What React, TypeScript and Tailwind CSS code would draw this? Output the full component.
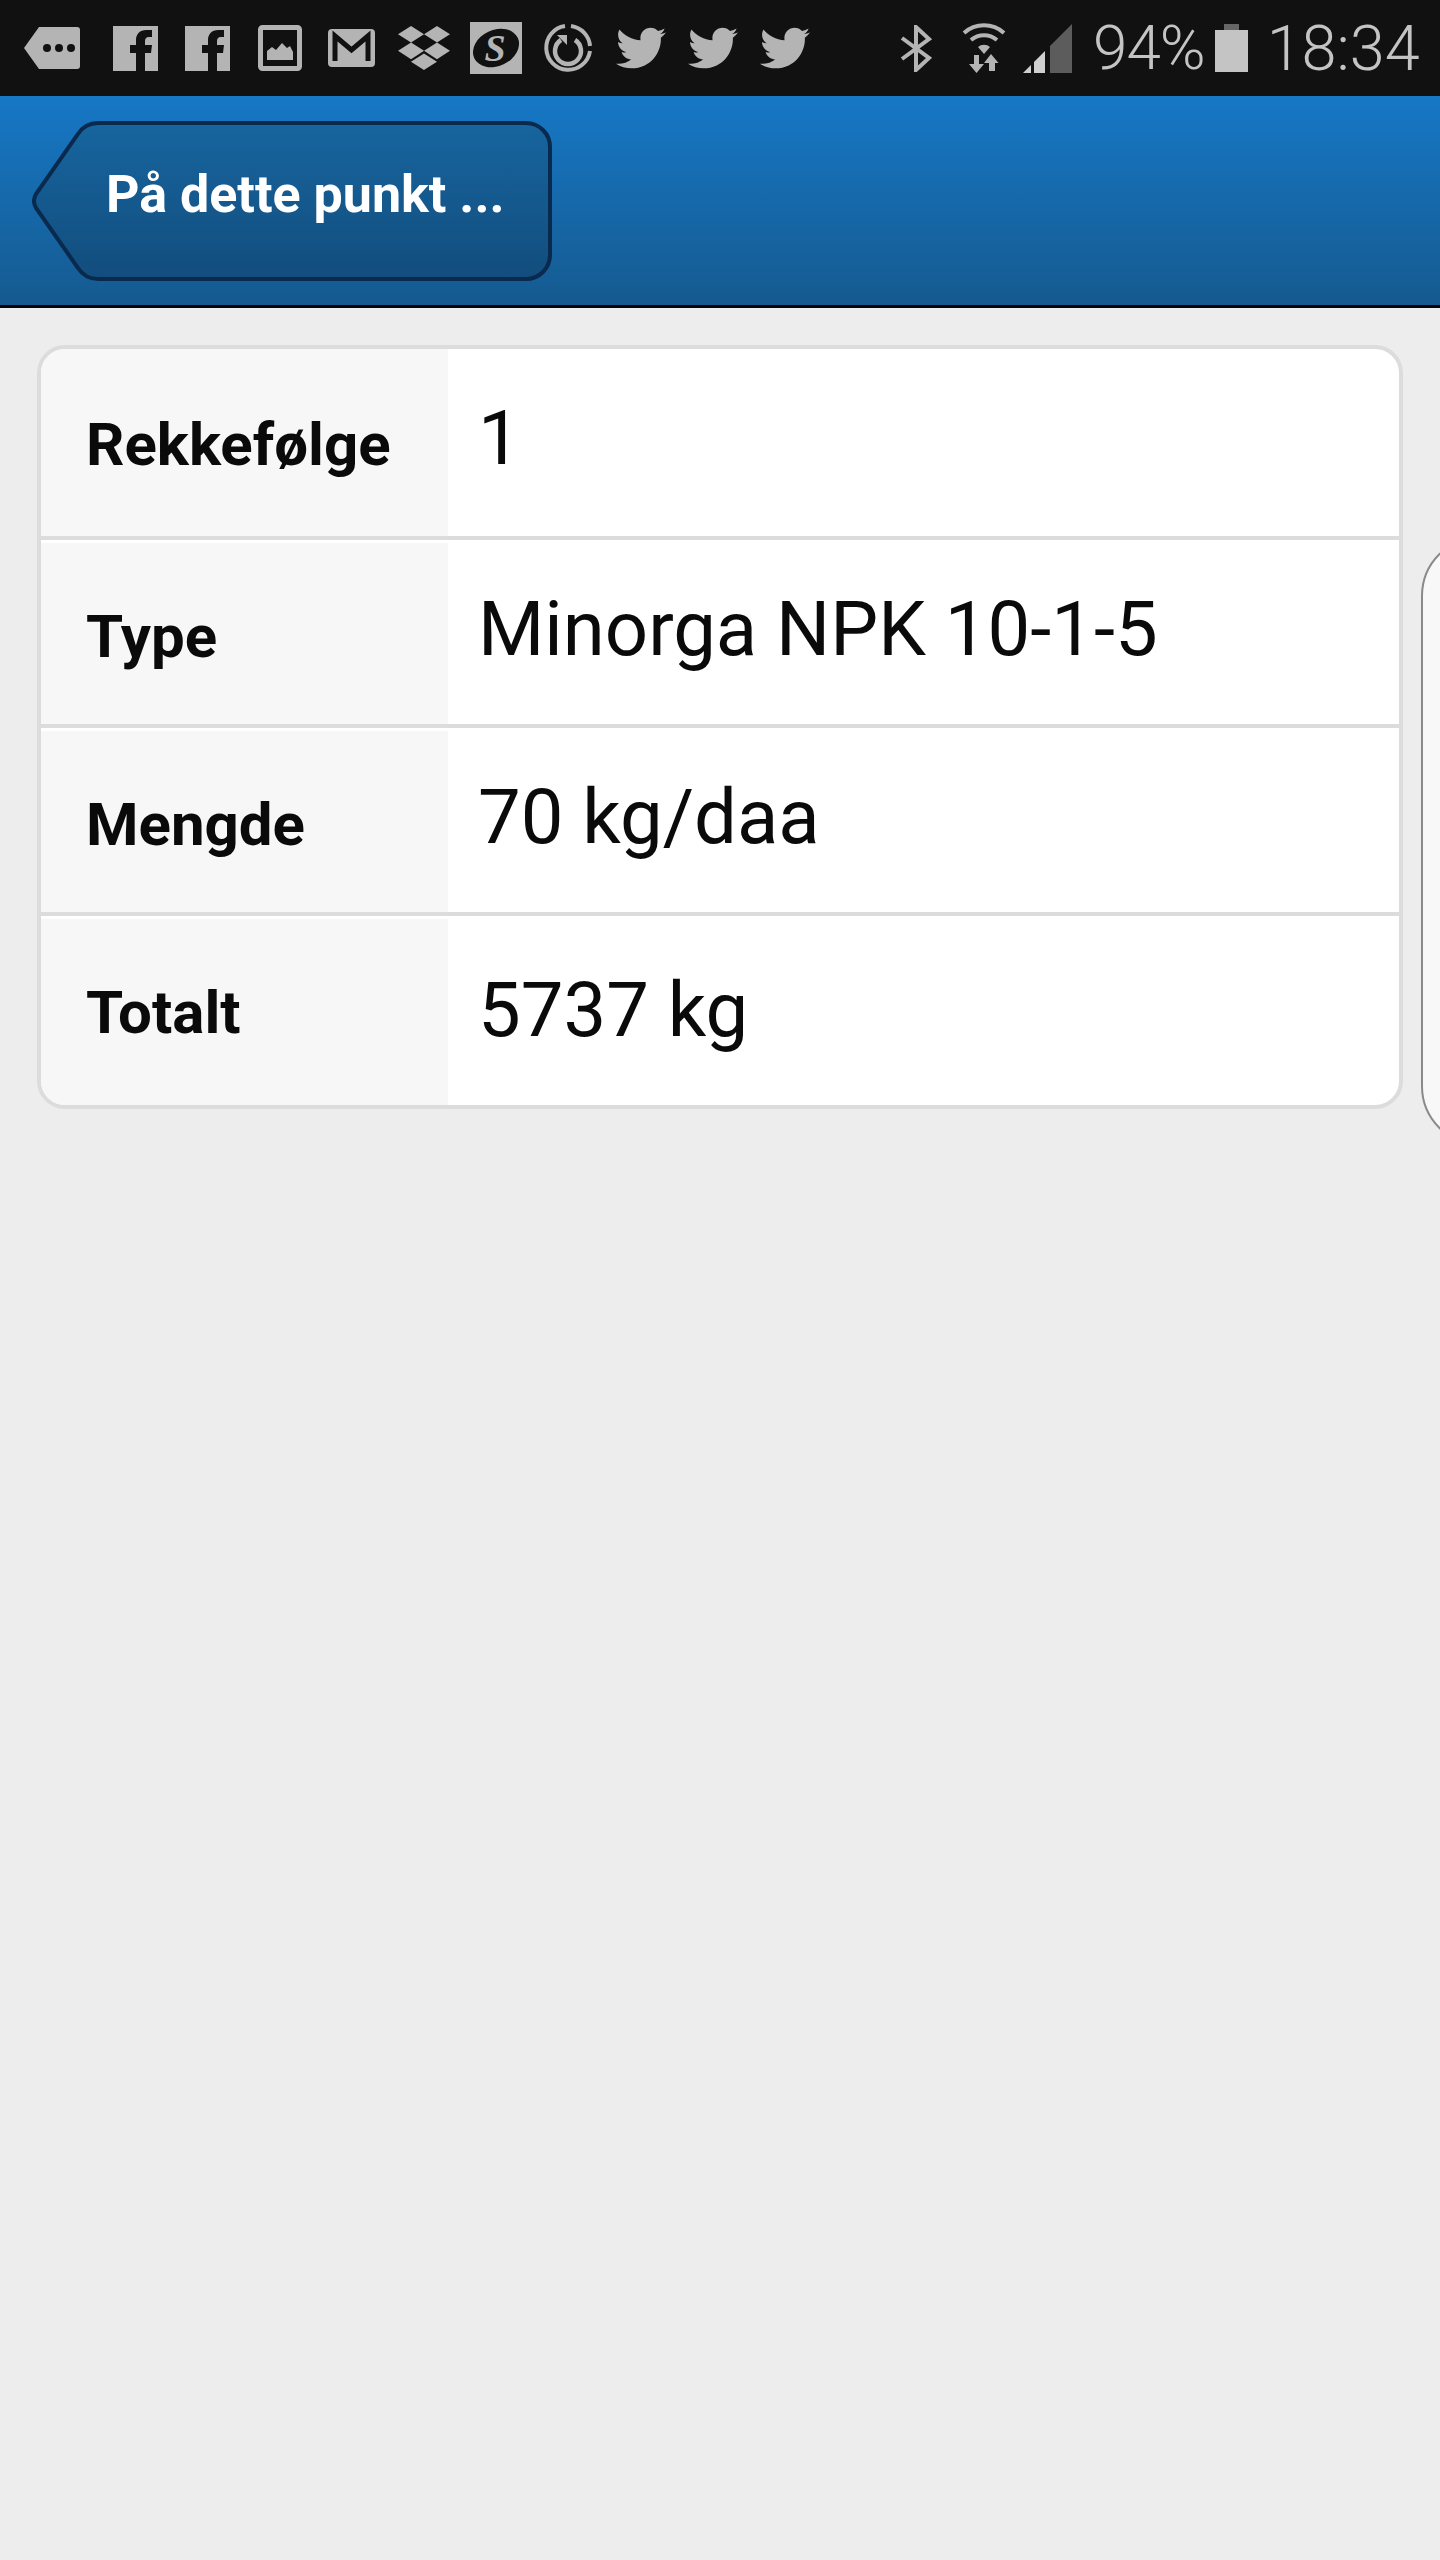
import { FaTwitter, FaDropbox } from "react-icons/fa";

const rows = [
  { label: "Rekkefølge", value: "1", height: "h-[187px]", pad: "pt-[4px]", shift: "-mt-[9px]" },
  { label: "Type", value: "Minorga NPK 10-1-5", height: "h-[188px]", pad: "pt-[6px]", shift: "-mt-[6px]" },
  { label: "Mengde", value: "70 kg/daa", height: "h-[188px]", pad: "pt-[6px]", shift: "-mt-[6px]" },
  { label: "Totalt", value: "5737 kg", height: "h-[193px]", pad: "pt-[1px]", shift: "-mt-[2px]" },
];

function Facebook() {
  return (
    <svg width="45" height="45" viewBox="0 0 45 45" className="shrink-0">
      <path
        fill="#b4b4b4"
        d="M0 0h45v45H32V27h6l1-8h-7v-4c0-2 1-4 4-4h3V4h-6c-6 0-10 4-10 10v5h-6v8h6v18H0z"
      />
    </svg>
  );
}

function StatusBar() {
  return (
    <div className="flex h-[96px] items-center bg-[#111111] pl-[24px] text-[#c4c4c4]">
      {/* chat tag */}
      <svg width="56" height="42" viewBox="0 0 56 42" className="shrink-0">
        <path
          fill="#b4b4b4"
          d="M15 0h38a3 3 0 0 1 3 3v36a3 3 0 0 1-3 3H15L0 21z"
        />
        <circle cx="23" cy="21" r="4" fill="#111" />
        <circle cx="35" cy="21" r="4" fill="#111" />
        <circle cx="47" cy="21" r="4" fill="#111" />
      </svg>
      <div className="ml-[33px] flex gap-[27px]">
        <Facebook />
        <Facebook />
      </div>
      {/* gallery */}
      <svg width="44" height="46" viewBox="0 0 44 46" className="ml-[28px] shrink-0">
        <rect x="2.5" y="2.5" width="39" height="41" rx="2" fill="none" stroke="#b4b4b4" strokeWidth="5" />
        <path fill="#b4b4b4" d="M9 35V26l5-4 4 3 6-7 5 5 3-2 3 6v8z" />
      </svg>
      {/* gmail */}
      <svg width="47" height="38" viewBox="0 0 47 38" className="ml-[26px] shrink-0">
        <rect width="47" height="38" rx="4" fill="#b4b4b4" />
        <path d="M7 32V7l16.500 14L40 7v25" fill="none" stroke="#111" strokeWidth="5" />
      </svg>
      <FaDropbox className="ml-[23px] shrink-0 text-[#b4b4b4]" size={52} />
      {/* s badge */}
      <svg width="52" height="52" viewBox="0 0 52 52" className="ml-[20px] shrink-0">
        <rect width="52" height="52" fill="#b4b4b4" />
        <ellipse cx="26" cy="26" rx="24" ry="18" transform="rotate(-25 26 26)" fill="#111" />
        <text
          x="25"
          y="39"
          textAnchor="middle"
          fontFamily="'Liberation Serif', serif"
          fontWeight="700"
          fontStyle="italic"
          fontSize="38"
          fill="#b4b4b4"
        >
          S
        </text>
      </svg>
      {/* sync circle */}
      <svg width="50" height="50" viewBox="0 0 50 50" className="ml-[21px] shrink-0">
        <path d="M22 3a22 22 0 1 0 25 25" fill="none" stroke="#b4b4b4" strokeWidth="4" />
        <path d="M28 3a22 22 0 0 1 19 20" fill="none" stroke="#b4b4b4" strokeWidth="4" />
        <path d="M18 17a13 13 0 1 0 14 0" fill="none" stroke="#b4b4b4" strokeWidth="4.500" />
        <path d="M14 12h10v10z" fill="#b4b4b4" />
      </svg>
      <div className="ml-[23px] flex gap-[22px]">
        <FaTwitter className="text-[#b4b4b4]" size={50} />
        <FaTwitter className="text-[#b4b4b4]" size={50} />
        <FaTwitter className="text-[#b4b4b4]" size={50} />
      </div>
      {/* bluetooth */}
      <svg width="33" height="47" viewBox="0 0 33 47" className="ml-[90px] shrink-0">
        <path d="M2 13l27 20-13 12V2l13 12L2 34" fill="none" stroke="#b4b4b4" strokeWidth="4" />
      </svg>
      {/* wifi with arrows */}
      <svg width="44" height="50" viewBox="0 0 44 50" className="ml-[29px] shrink-0">
        <path d="M2 10a30 30 0 0 1 40 0" fill="none" stroke="#b4b4b4" strokeWidth="4" />
        <path d="M9 17a20 20 0 0 1 26 0" fill="none" stroke="#b4b4b4" strokeWidth="4" />
        <path d="M16 24a9 9 0 0 1 12 0l-6 7z" fill="#b4b4b4" />
        <path d="M12 32h5v9h5l-7.500 9L7 41h5z" fill="#b4b4b4" />
        <path d="M29 31l7.500 9H33v8h-6v-8h-5z" fill="#b4b4b4" />
      </svg>
      {/* signal */}
      <svg width="49" height="49" viewBox="0 0 49 49" className="ml-[17px] shrink-0">
        <path d="M0 49l8-8v8z" fill="#cfcfcf" />
        <path d="M11 38l11-11v22H11z" fill="#cfcfcf" />
        <path d="M27 22L49 0v49H27z" fill="#5c5c5c" />
      </svg>
      <span className="ml-[21px] text-[62px] leading-none font-light tracking-[-1px]">94%</span>
      {/* battery */}
      <svg width="33" height="48" viewBox="0 0 33 48" className="ml-[10px] shrink-0">
        <rect x="9" width="15" height="6" fill="#666" />
        <rect y="6" width="33" height="42" fill="#c4c4c4" />
      </svg>
      <span className="ml-[19px] text-[63px] leading-none font-light">18:34</span>
    </div>
  );
}

function BackButton() {
  return (
    <div className="relative ml-[32px] flex h-[160px] w-[520px] items-center pb-[12px] pl-[74px]">
      <svg width="520" height="160" viewBox="0 0 520 160" className="absolute top-0 left-0">
        <defs>
          <linearGradient id="backFill" x1="0" y1="0" x2="0" y2="1">
            <stop offset="0" stopColor="#17659f" />
            <stop offset="1" stopColor="#124d7d" />
          </linearGradient>
        </defs>
        <path
          d="M66 2H494a24 24 0 0 1 24 24V134a24 24 0 0 1-24 24H66a24 24 0 0 1-20-11L4 87a14 14 0 0 1 0-14L46 13A24 24 0 0 1 66 2z"
          fill="url(#backFill)"
          stroke="#0a2a4d"
          strokeWidth="4"
        />
      </svg>
      <span className="relative text-[52px] leading-none font-bold text-white">På dette punkt ...</span>
    </div>
  );
}

export default function App() {
  return (
    <div className="min-h-[2560px] overflow-hidden bg-[#ededed] font-['Roboto',sans-serif]">
      <StatusBar />
      <div className="flex h-[212px] items-center border-b-[3px] border-[#050505] bg-linear-to-b from-[#1678c6] to-[#155a90]">
        <BackButton />
      </div>

      <div className="flex items-start pt-[37px] pl-[37px]">
        <div className="w-[1366px] shrink-0 overflow-hidden rounded-[28px] border-[4px] border-[#dcdcdc] bg-white">
          {rows.map((row, i) => (
            <div key={row.label} className={`flex ${row.height} ${i > 0 ? "border-t-[4px] border-[#dcdcdc]" : ""}`}>
              <div className={`flex w-[407px] items-center bg-[#f7f7f7] pl-[45px] ${row.pad} ${i > 0 ? "mt-[3px]" : ""}`}>
                <span className="text-[60px] leading-none font-bold text-[#0a0a0a]">{row.label}</span>
              </div>
              <div className="flex flex-1 items-center pl-[30px]">
                <span className={`text-[76px] leading-none text-[#0a0a0a] ${row.shift}`}>{row.value}</span>
              </div>
            </div>
          ))}
        </div>
        <div className="mt-[191px] ml-[18px] h-[610px] w-[100px] shrink-0 rounded-l-[60px] border-[2px] border-[#8a8a8a] bg-[#f8f8f8]" />
      </div>
    </div>
  );
}
